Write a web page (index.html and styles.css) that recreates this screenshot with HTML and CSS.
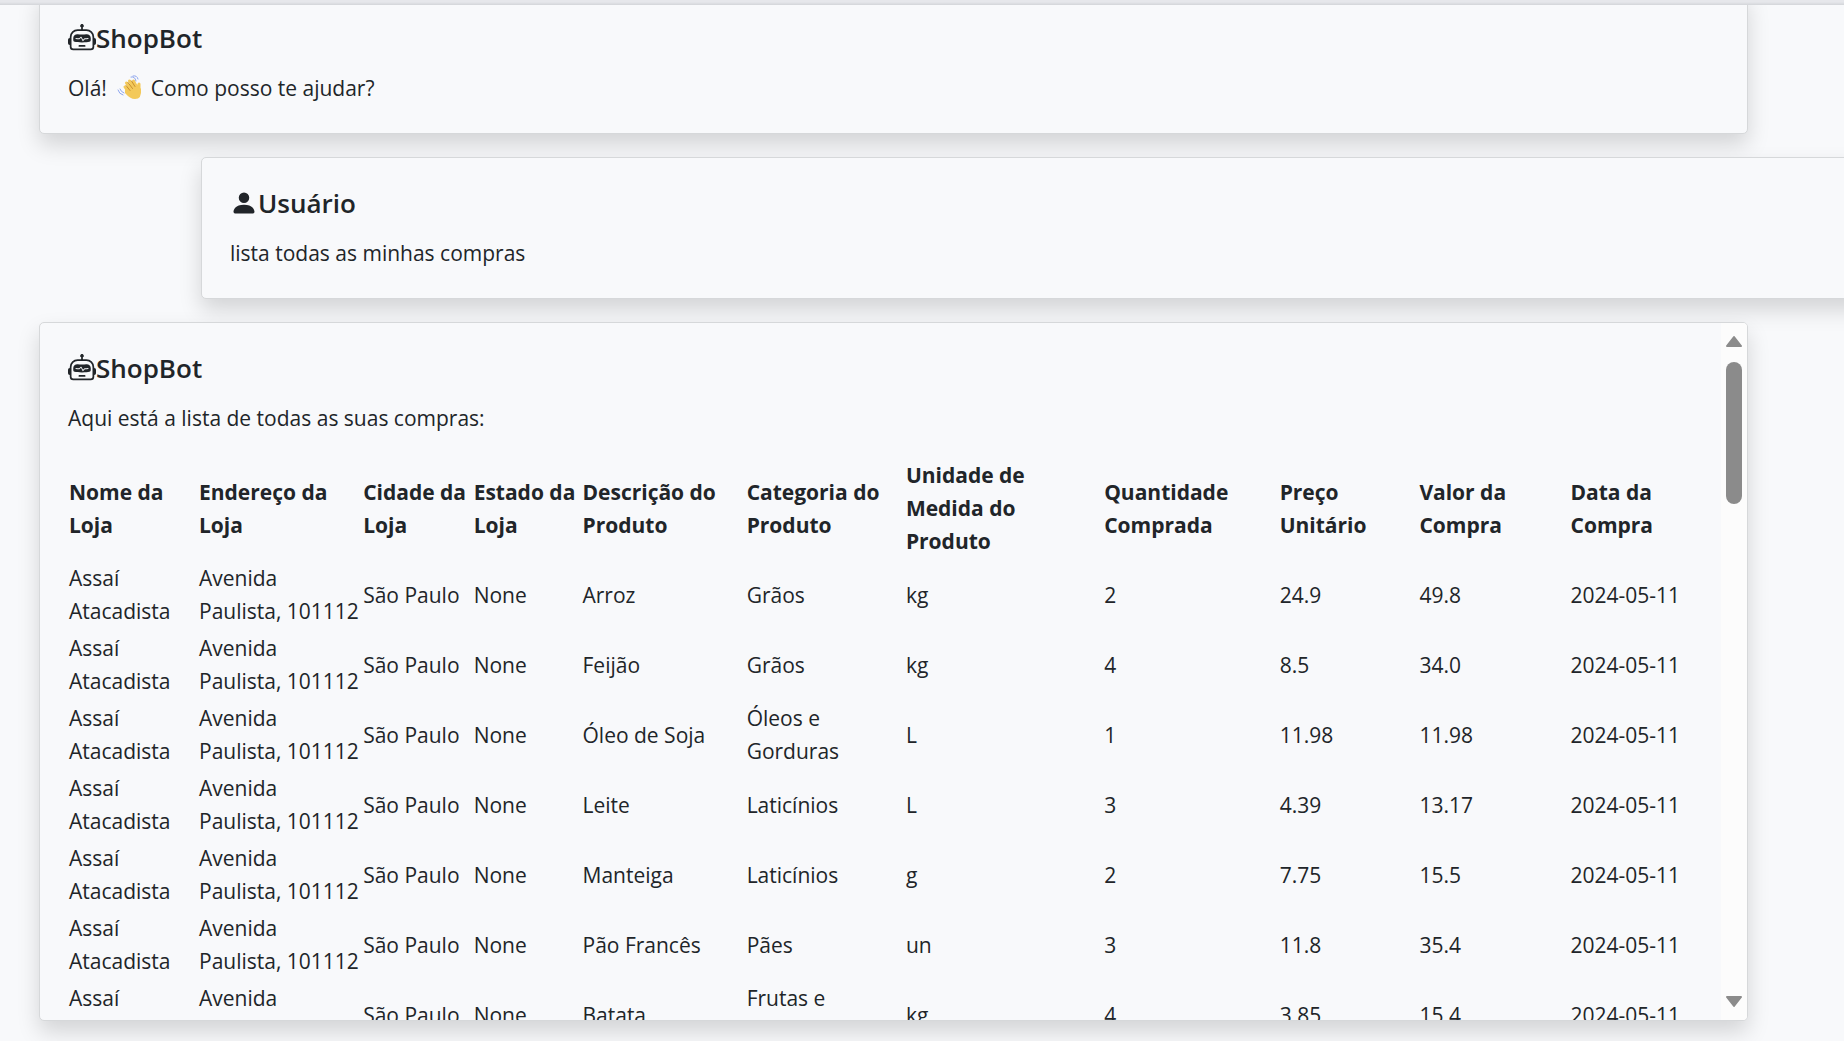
FILE: index.html
```html
<!DOCTYPE html>
<html lang="pt-BR">
<head>
<meta charset="utf-8">
<title>ShopBot</title>
<link rel="stylesheet" href="styles.css">
</head>
<body>
<svg class="sprite" aria-hidden="true">
  <symbol id="robot" viewBox="0 0 16 16">
    <path d="M6 12.5a.5.5 0 0 1 .5-.5h3a.5.5 0 0 1 0 1h-3a.5.5 0 0 1-.5-.5M3 8.062C3 6.76 4.235 5.765 5.53 5.886a26.6 26.6 0 0 0 4.94 0C11.765 5.765 13 6.76 13 8.062v1.157a.93.93 0 0 1-.765.935c-.845.147-2.34.346-4.235.346s-3.39-.2-4.235-.346A.93.93 0 0 1 3 9.219zm4.542-.827a.25.25 0 0 0-.217.068l-.92.9a25 25 0 0 1-1.871-.183.25.25 0 0 0-.068.495c.55.076 1.232.149 2.02.193a.25.25 0 0 0 .189-.071l.754-.736.847 1.71a.25.25 0 0 0 .404.062l.932-.97a25 25 0 0 0 1.922-.188.25.25 0 0 0-.068-.495c-.538.074-1.207.145-1.98.189a.25.25 0 0 0-.166.076l-.754.785-.842-1.7a.25.25 0 0 0-.182-.135"/>
    <path d="M8.5 1.866a1 1 0 1 0-1 0V3h-2A4.5 4.5 0 0 0 1 7.5V8a1 1 0 0 0-1 1v2a1 1 0 0 0 1 1v1a2 2 0 0 0 2 2h10a2 2 0 0 0 2-2v-1a1 1 0 0 0 1-1V9a1 1 0 0 0-1-1v-.5A4.5 4.5 0 0 0 10.5 3h-2zM14 7.5V13a1 1 0 0 1-1 1H3a1 1 0 0 1-1-1V7.5A3.5 3.5 0 0 1 5.5 4h5A3.5 3.5 0 0 1 14 7.5"/>
  </symbol>
  <symbol id="person" viewBox="0 0 16 16">
    <path d="M3 14s-1 0-1-1 1-4 6-4 6 3 6 4-1 1-1 1zm5-6a3 3 0 1 0 0-6 3 3 0 0 0 0 6"/>
  </symbol>
</svg>
<div class="topbar"></div>
<main class="chat">
  <article class="card card-first">
    <div class="card-body">
      <h5 class="author"><svg class="icon"><use href="#robot"/></svg>ShopBot</h5>
      <p class="message">Olá! <svg class="wave" viewBox="0 0 26 26" role="img" aria-label="aceno">
        <path class="hand" d="M8 12 L13 19 M9.500 8 L15 15 M12.500 6 L18 13 M16.500 6 L20 13 M22 9 L22 16"/>
        <path class="palm" d="M8 14 L12 9 L20 9 L24 14 Q25 24 18 24 Q13 24 8 18 Z"/>
        <path class="crease" d="M9 10.500 L13 15.500 M11 7.500 L15.500 13.500 M14.500 6 L18 11.500"/>
        <path class="motion" d="M14 2 Q18 1 19 6 M16 1 Q20 0 21 4 M1 15 Q2 19 6 20 M3 14 Q4 17 7 18"/>
      </svg> Como posso te ajudar?</p>
    </div>
  </article>

  <article class="card card-user">
    <div class="card-body">
      <h5 class="author"><svg class="icon"><use href="#person"/></svg>Usuário</h5>
      <p class="message">lista todas as minhas compras</p>
    </div>
  </article>

  <article class="card card-list">
    <div class="card-body">
      <h5 class="author"><svg class="icon"><use href="#robot"/></svg>ShopBot</h5>
      <p class="message">Aqui está a lista de todas as suas compras:</p>
      <table class="purchases">
        <colgroup>
          <col class="c-store"><col class="c-address"><col class="c-city"><col class="c-state"><col class="c-product"><col class="c-category"><col class="c-unit"><col class="c-quantity"><col class="c-price"><col class="c-value"><col>
        </colgroup>
        <thead>
          <tr><th>Nome da Loja</th><th>Endereço da Loja</th><th>Cidade da Loja</th><th>Estado da Loja</th><th>Descrição do Produto</th><th>Categoria do Produto</th><th>Unidade de<br>Medida do<br>Produto</th><th>Quantidade Comprada</th><th>Preço Unitário</th><th>Valor da Compra</th><th>Data da Compra</th></tr>
        </thead>
        <tbody>
          <tr><td>Assaí Atacadista</td><td>Avenida Paulista, 101112</td><td>São Paulo</td><td>None</td><td>Arroz</td><td>Grãos</td><td>kg</td><td>2</td><td>24.9</td><td>49.8</td><td>2024-05-11</td></tr>
          <tr><td>Assaí Atacadista</td><td>Avenida Paulista, 101112</td><td>São Paulo</td><td>None</td><td>Feijão</td><td>Grãos</td><td>kg</td><td>4</td><td>8.5</td><td>34.0</td><td>2024-05-11</td></tr>
          <tr><td>Assaí Atacadista</td><td>Avenida Paulista, 101112</td><td>São Paulo</td><td>None</td><td>Óleo de Soja</td><td>Óleos e Gorduras</td><td>L</td><td>1</td><td>11.98</td><td>11.98</td><td>2024-05-11</td></tr>
          <tr><td>Assaí Atacadista</td><td>Avenida Paulista, 101112</td><td>São Paulo</td><td>None</td><td>Leite</td><td>Laticínios</td><td>L</td><td>3</td><td>4.39</td><td>13.17</td><td>2024-05-11</td></tr>
          <tr><td>Assaí Atacadista</td><td>Avenida Paulista, 101112</td><td>São Paulo</td><td>None</td><td>Manteiga</td><td>Laticínios</td><td>g</td><td>2</td><td>7.75</td><td>15.5</td><td>2024-05-11</td></tr>
          <tr><td>Assaí Atacadista</td><td>Avenida Paulista, 101112</td><td>São Paulo</td><td>None</td><td>Pão Francês</td><td>Pães</td><td>un</td><td>3</td><td>11.8</td><td>35.4</td><td>2024-05-11</td></tr>
          <tr><td>Assaí Atacadista</td><td>Avenida Paulista, 101112</td><td>São Paulo</td><td>None</td><td>Batata</td><td>Frutas e Verduras</td><td>kg</td><td>4</td><td>3.85</td><td>15.4</td><td>2024-05-11</td></tr>
        </tbody>
      </table>
    </div>
    <div class="scrollbar" aria-hidden="true">
      <svg class="arrow" viewBox="0 0 16 12"><path d="M8 2 L15 11 L1 11 Z"/></svg>
      <div class="track"><div class="thumb"></div></div>
      <svg class="arrow" viewBox="0 0 16 12"><path d="M8 10 L15 1 L1 1 Z"/></svg>
    </div>
  </article>
</main>
</body>
</html>
```
FILE: styles.css
```css
*,
*::before,
*::after {
  box-sizing: border-box;
}

body {
  margin: 0;
  height: 100vh;
  overflow: hidden;
  display: flex;
  flex-direction: column;
  background: #f8f9fb;
  color: #212529;
  font-family: "Segoe UI", "Open Sans", "Noto Sans", sans-serif;
  font-size: 21px;
  line-height: 33px;
}

.sprite {
  display: none;
}

.topbar {
  flex: none;
  height: 5px;
  position: relative;
  z-index: 1;
  background: linear-gradient(#e6e7eb 40%, #d3d5d9);
}

.chat {
  flex: 1;
  min-height: 0;
  display: flex;
  flex-direction: column;
  gap: 23px;
  padding: 0 96px 20px 39px;
}

.card {
  flex: none;
  display: flex;
  width: 100%;
  border: 1px solid #d6d8da;
  border-radius: 5px;
  background: #f8f9fb;
  box-shadow: 0 11px 22px rgba(0, 0, 0, 0.15);
}

/* The first message is partly scrolled under the top bar. */
.card-first {
  margin-top: -13px;
}

.card-user {
  margin-left: 162px;
}

.card-list {
  flex: 1;
  min-height: 0;
  overflow: hidden;
}

.card-body {
  flex: 1;
  min-width: 0;
  padding: 28px;
}

.author {
  display: flex;
  align-items: center;
  margin: 0 0 17px;
  font-size: 26px;
  font-weight: 600;
  line-height: 34px;
}

.icon {
  width: 28px;
  height: 28px;
  fill: currentColor;
}

.message {
  margin: 0 0 22px;
}

.card-first .message,
.card-user .message {
  margin-bottom: 0;
}

.wave {
  width: 26px;
  height: 26px;
  margin: 0 2px 0 5px;
  vertical-align: -5px;
  fill: none;
  stroke-linecap: round;
  stroke-linejoin: round;
}

.wave .hand {
  stroke: #f3c95a;
  stroke-width: 3;
}

.wave .palm {
  fill: #f3c95a;
}

.wave .crease {
  stroke: #c78f2e;
}

.wave .motion {
  stroke: #8ea6ee;
}

.purchases {
  width: 100%;
  table-layout: fixed;
  border-collapse: collapse;
}

.purchases th,
.purchases td {
  padding: 2px 1px;
  text-align: left;
  vertical-align: middle;
}

.purchases th {
  font-weight: 700;
}

.c-store { width: 8%; }
.c-address { width: 10.1%; }
.c-city { width: 6.8%; }
.c-state { width: 6.7%; }
.c-product { width: 10.1%; }
.c-category { width: 9.8%; }
.c-unit { width: 12.2%; }
.c-quantity { width: 10.8%; }
.c-price { width: 8.6%; }
.c-value { width: 9.3%; }

.scrollbar {
  flex: none;
  display: flex;
  flex-direction: column;
  align-items: center;
  gap: 15px;
  width: 26px;
  padding: 12px 0;
  background: #fcfcfc;
}

.arrow {
  width: 16px;
  height: 12px;
  fill: #8b8b8b;
  stroke: #8b8b8b;
  stroke-width: 2;
  stroke-linejoin: round;
}

.track {
  flex: 1;
  width: 16px;
}

.thumb {
  height: 23%;
  border-radius: 8px;
  background: #8b8b8b;
}
```
